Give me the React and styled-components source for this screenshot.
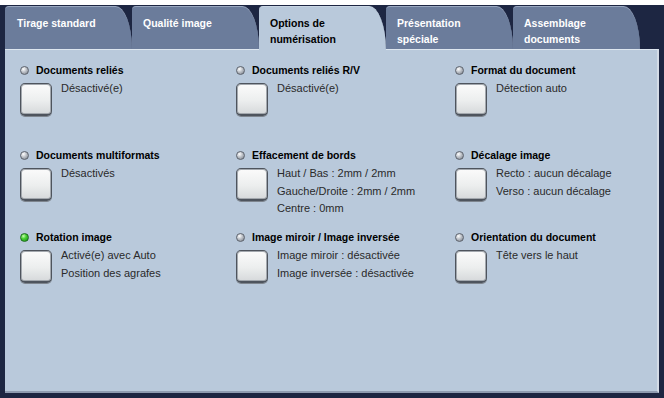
import React from 'react'
import styled, { createGlobalStyle } from 'styled-components'

const GlobalStyle = createGlobalStyle`
    html, body {
        margin:0;
        padding:0;
        background:#1d2642;
    }
    #root {
        width:664px;
        height:398px;
        overflow:hidden;
    }
`

const Screen = styled.div`
    width:664px;
    height:398px;
    background:#1d2642;
    border-top:5px solid #ffffff;
    box-sizing:border-box;
    display:flex;
    flex-direction:column;
    font-family:"Liberation Sans", Arial, sans-serif;
`

const TabBar = styled.div`
    display:flex;
    align-items:flex-end;
    padding-left:5px;
    height:44px;
    box-sizing:border-box;
    padding-top:1px;
`

const Tab = styled.div`
    position:relative;
    z-index:${p => p.$active ? 2 : 1};
    width:127px;
    height:${p => p.$active ? '44px' : '43px'};
    margin-bottom:${p => p.$active ? '-1px' : '0'};
    box-sizing:border-box;
    padding:8px 0 0 ${p => p.$first ? '12px' : '11px'};
    background:${p => p.$active ? '#b9c9db' : '#6b7c9b'};
    border-top:1px solid ${p => p.$active ? '#c9d6e4' : '#9aa8c0'};
    border-radius:4px 17px 0 0 / 4px 44px 0 0;
    color:${p => p.$active ? '#000000' : '#ffffff'};
    font-size:10.5px;
    font-weight:bold;
    line-height:16px;
    white-space:nowrap;
`

const Panel = styled.div`
    margin-left:5px;
    width:654px;
    height:344px;
    box-sizing:border-box;
    background:#b9c9db;
    border-top:1px solid #dde6ef;
    border-right:2px solid #d3dbe6;
    border-bottom:2px solid #8f9cb1;
    padding:13px 0 0 15px;
    display:grid;
    grid-template-columns:216px 219px 1fr;
    grid-template-rows:85px 82px auto;
`

const Option = styled.div`
    display:flex;
    flex-direction:column;
`

const TitleRow = styled.div`
    display:flex;
    align-items:center;
    gap:7px;
    height:14px;
`

const Radio = styled.span`
    width:9px;
    height:9px;
    border-radius:50%;
    box-sizing:border-box;
    border:1px solid ${p => p.$on ? '#1f6e1f' : '#5d636d'};
    background:${p => p.$on
        ? 'radial-gradient(circle at 35% 30%, #c8ffb0 0, #48d032 40%, #138a13 100%)'
        : 'radial-gradient(circle at 35% 30%, #ffffff 0, #c4c8ce 40%, #747a84 100%)'};
    flex-shrink:0;
`

const Title = styled.span`
    font-size:10.5px;
    font-weight:bold;
    color:#000000;
    white-space:nowrap;
`

const Body = styled.div`
    display:flex;
    align-items:flex-start;
    margin-top:3px;
`

const SquareButton = styled.div`
    width:32px;
    height:33px;
    margin-top:3px;
    margin-right:9px;
    box-sizing:border-box;
    flex-shrink:0;
    border-radius:5px;
    border:1px solid #4e545d;
    border-bottom-width:2px;
    background:linear-gradient(180deg, #fbfbfb 0%, #eceeee 55%, #d6d9db 100%);
    box-shadow:inset 0 0 0 1px #a3a8ae, 0 1px 0 #7e858e;
`

const Description = styled.div`
    font-size:11px;
    line-height:17.5px;
    color:#2a2a2a;
    white-space:nowrap;
`

const tabs = [
    ['Tirage standard'],
    ['Qualité image'],
    ['Options de', 'numérisation'],
    ['Présentation', 'spéciale'],
    ['Assemblage', 'documents'],
]

const options = [
    { title: 'Documents reliés', lines: ['Désactivé(e)'] },
    { title: 'Documents reliés R/V', lines: ['Désactivé(e)'] },
    { title: 'Format du document', lines: ['Détection auto'] },
    { title: 'Documents multiformats', lines: ['Désactivés'] },
    { title: 'Effacement de bords', lines: ['Haut / Bas : 2mm / 2mm', 'Gauche/Droite : 2mm / 2mm', 'Centre : 0mm'] },
    { title: 'Décalage image', lines: ['Recto : aucun décalage', 'Verso : aucun décalage'] },
    { title: 'Rotation image', on: true, lines: ['Activé(e) avec Auto', 'Position des agrafes'] },
    { title: 'Image miroir / Image inversée', lines: ['Image miroir : désactivée', 'Image inversée : désactivée'] },
    { title: 'Orientation du document', lines: ['Tête vers le haut'] },
]

export default function App() {
    return (
        <Screen>
            <GlobalStyle />
            <TabBar>
                {tabs.map((t, i) => (
                    <Tab key={i} $active={i === 2} $first={i === 0}>
                        {t.map(line => <div key={line}>{line}</div>)}
                    </Tab>
                ))}
            </TabBar>
            <Panel>
                {options.map(o => (
                    <Option key={o.title}>
                        <TitleRow>
                            <Radio $on={o.on} />
                            <Title>{o.title}</Title>
                        </TitleRow>
                        <Body>
                            <SquareButton />
                            <Description>
                                {o.lines.map(l => <div key={l}>{l}</div>)}
                            </Description>
                        </Body>
                    </Option>
                ))}
            </Panel>
        </Screen>
    )
}
